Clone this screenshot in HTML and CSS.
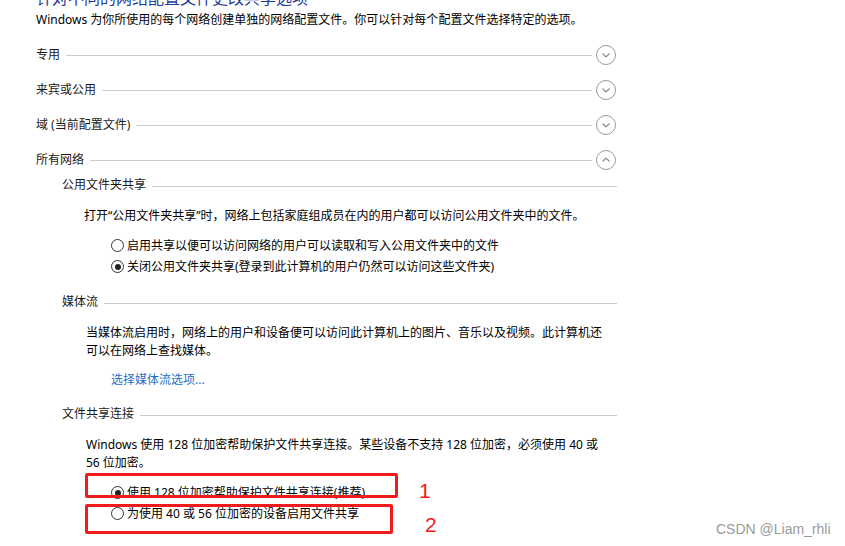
FILE: index.html
```html
<!DOCTYPE html>
<html lang="zh-CN">
<head>
<meta charset="utf-8">
<title>高级共享设置</title>
<link rel="stylesheet" href="styles.css">
</head>
<body>
<div class="page">
  <h1 class="title">针对不同的网络配置文件更改共享选项</h1>
  <p class="intro">Windows 为你所使用的每个网络创建单独的网络配置文件。你可以针对每个配置文件选择特定的选项。</p>
  <div class="profiles">
    <div class="profile-head">
      <span class="label">专用</span><span class="rule"></span>
      <svg class="chev" viewBox="0 0 20 20" width="20" height="20"><circle cx="10" cy="10" r="9.5"/><path d="M6.5 8.5 L10 12 L13.5 8.5"/></svg>
    </div>
    <div class="profile-head">
      <span class="label">来宾或公用</span><span class="rule"></span>
      <svg class="chev" viewBox="0 0 20 20" width="20" height="20"><circle cx="10" cy="10" r="9.5"/><path d="M6.5 8.5 L10 12 L13.5 8.5"/></svg>
    </div>
    <div class="profile-head">
      <span class="label">域 (当前配置文件)</span><span class="rule"></span>
      <svg class="chev" viewBox="0 0 20 20" width="20" height="20"><circle cx="10" cy="10" r="9.5"/><path d="M6.5 8.5 L10 12 L13.5 8.5"/></svg>
    </div>
    <div class="profile-head">
      <span class="label">所有网络</span><span class="rule"></span>
      <svg class="chev" viewBox="0 0 20 20" width="20" height="20"><circle cx="10" cy="10" r="9.5"/><path d="M6.5 11.5 L10 8 L13.5 11.5"/></svg>
    </div>
    <div class="profile-body">
      <section class="group">
        <div class="group-head"><span class="label">公用文件夹共享</span><span class="rule"></span></div>
        <p class="group-text group-text-first">打开“公用文件夹共享”时，网络上包括家庭组成员在内的用户都可以访问公用文件夹中的文件。</p>
        <div class="options">
          <div class="option"><span class="radio"></span><span>启用共享以便可以访问网络的用户可以读取和写入公用文件夹中的文件</span></div>
          <div class="option"><span class="radio checked"></span><span>关闭公用文件夹共享(登录到此计算机的用户仍然可以访问这些文件夹)</span></div>
        </div>
      </section>
      <section class="group">
        <div class="group-head"><span class="label">媒体流</span><span class="rule"></span></div>
        <p class="group-text">当媒体流启用时，网络上的用户和设备便可以访问此计算机上的图片、音乐以及视频。此计算机还<br>可以在网络上查找媒体。</p>
        <a class="link" href="#">选择媒体流选项...</a>
      </section>
      <section class="group">
        <div class="group-head"><span class="label">文件共享连接</span><span class="rule"></span></div>
        <p class="group-text">Windows 使用 128 位加密帮助保护文件共享连接。某些设备不支持 128 位加密，必须使用 40 或<br>56 位加密。</p>
        <div class="options">
          <div class="option"><span class="radio checked"></span><span>使用 128 位加密帮助保护文件共享连接(推荐)</span></div>
          <div class="option"><span class="radio"></span><span>为使用 40 或 56 位加密的设备启用文件共享</span></div>
        </div>
      </section>
    </div>
  </div>
</div>

<div class="mark mark-1"></div>
<div class="mark mark-2"></div>
<span class="mark-num mark-num-1">1</span>
<span class="mark-num mark-num-2">2</span>
<span class="watermark">CSDN @Liam_rhli</span>
</body>
</html>
```

FILE: styles.css
```css
html, body {
  margin: 0;
  padding: 0;
  background: #ffffff;
}

body {
  width: 845px;
  height: 546px;
  overflow: hidden;
  position: relative;
  font-family: "Noto Sans", "Noto Sans CJK SC", sans-serif;
  font-size: 12px;
  line-height: 18px;
  color: #000000;
}

.page {
  padding-left: 36px;
  width: 580px;
}

.title {
  margin: -12px 0 0 0;
  font-size: 16px;
  line-height: 20px;
  font-weight: normal;
  color: #1e3c9b;
  white-space: nowrap;
}

.intro {
  margin: 3px 0 0 0;
  white-space: nowrap;
}

.profiles {
  margin-top: 8px;
}

.profile-head {
  height: 35px;
  display: flex;
  align-items: center;
}

.label {
  white-space: nowrap;
  color: #1a1a1a;
}

.rule {
  flex: 1;
  height: 1px;
  background: #cccccc;
  margin-left: 6px;
  margin-top: 2px;
}

.chev {
  margin-left: 4px;
  margin-top: 1px;
  flex: none;
  fill: none;
  stroke: #9a9a9a;
  stroke-width: 1;
}

.chev path {
  stroke: #8c8c8c;
  stroke-width: 1.2;
}

.profile-body {
  margin-top: -1px;
  padding-left: 26px;
}

.group + .group {
  margin-top: 16px;
}

.group-head {
  height: 18px;
  display: flex;
  align-items: center;
}

.group-head .rule {
  margin-right: -1px;
}

.group-text {
  margin: 13px 0 0 24px;
  white-space: nowrap;
}

.group-text-first {
  margin-left: 22px;
}

.options {
  margin-top: 10px;
  padding-left: 49px;
}

.option {
  height: 21px;
  display: flex;
  align-items: center;
  white-space: nowrap;
}

.radio {
  width: 11px;
  height: 11px;
  border: 1px solid #333333;
  border-radius: 50%;
  background: #ffffff;
  margin-right: 3px;
  display: flex;
  align-items: center;
  justify-content: center;
  flex: none;
}

.radio.checked::after {
  content: "";
  width: 6px;
  height: 6px;
  border-radius: 50%;
  background: #222222;
}

.link {
  display: block;
  width: max-content;
  margin: 11px 0 0 49px;
  color: #1f6fc8;
  text-decoration: none;
}

.mark {
  position: absolute;
  border: 3px solid #f01c1c;
  border-radius: 2px;
  box-sizing: border-box;
}

.mark-1 {
  left: 85px;
  top: 473px;
  width: 313px;
  height: 25px;
}

.mark-2 {
  left: 85px;
  top: 504px;
  width: 308px;
  height: 30px;
}

.mark-num {
  position: absolute;
  font-family: "Liberation Sans", sans-serif;
  font-size: 21px;
  line-height: 24px;
  color: #f01c1c;
}

.mark-num-1 {
  left: 419px;
  top: 479px;
}

.mark-num-2 {
  left: 425px;
  top: 513px;
}

.watermark {
  position: absolute;
  left: 716px;
  top: 520px;
  font-family: "Liberation Sans", sans-serif;
  font-size: 14px;
  line-height: 18px;
  color: #9a9a9a;
  white-space: nowrap;
}
```
